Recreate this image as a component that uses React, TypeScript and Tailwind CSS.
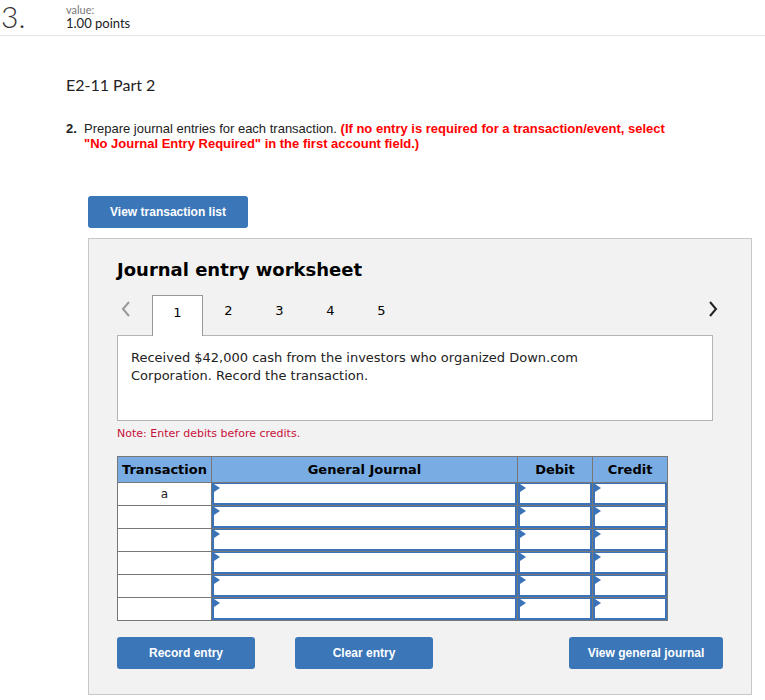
import React from 'react';

const narrow = "font-['Liberation_Sans_Narrow','Arial_Narrow','Liberation_Sans',sans-serif]";
const verdana = "font-['DejaVu_Sans','Verdana',sans-serif]";

function Triangle() {
  return (
    <svg className="absolute left-0 top-0" width="6" height="8" viewBox="0 0 6 8">
      <path d="M0 0 L6 4 L0 8 Z" fill="#3b73b9" />
    </svg>
  );
}

function InputCell({ w }: { w: string }) {
  return (
    <td className={`${w} h-[23px] border border-[#777] p-0 bg-white`}>
      <div className="relative h-[22px] border-2 border-[#3b73b9] border-t-[1px]">
        <Triangle />
      </div>
    </td>
  );
}

function BlueButton({ label, className }: { label: string; className?: string }) {
  return (
    <button
      className={`h-8 rounded-[3px] bg-[#3b76b8] text-white font-bold text-[12px] ${narrow} ${className ?? ''}`}
    >
      {label}
    </button>
  );
}

function Chevron({ dir, color }: { dir: 'left' | 'right'; color: string }) {
  return (
    <svg width="10" height="16" viewBox="0 0 10 16">
      <path
        d={dir === 'left' ? 'M8 1 L2 8 L8 15' : 'M2 1 L8 8 L2 15'}
        fill="none"
        stroke={color}
        strokeWidth="2"
      />
    </svg>
  );
}

export default function App() {
  const rows = ['a', '', '', '', '', ''];

  return (
    <div className="w-[765px] h-[700px] bg-white text-[#333] font-['Lato','Open_Sans',sans-serif] overflow-hidden">
      <div className="flex h-9 border-b border-[#e6e6e6]">
        <div className="w-[66px] pl-[1px] text-[30px] leading-[32px] font-light text-[#333]">3.</div>
        <div className="pt-[4px]">
          <div className="text-[11px] leading-[12px] text-[#777]">value:</div>
          <div className="text-[13px] leading-[15px] text-[#222]">1.00 points</div>
        </div>
      </div>

      <div className="pl-[66px]">
        <h2 className="mt-[40px] text-[16px] leading-[18px] text-[#222]">E2-11 Part 2</h2>

        <div className={`mt-[27px] flex text-[13px] leading-[15px] text-[#222] ${narrow}`}>
          <span className="w-[18px] shrink-0 font-bold">2.</span>
          <p className="w-[590px]">
            Prepare journal entries for each transaction.{' '}
            <span className="font-bold text-[#ff0000]">
              (If no entry is required for a transaction/event, select "No Journal Entry Required" in the first account field.)
            </span>
          </p>
        </div>
      </div>

      <div className="pl-[88px]">
        <BlueButton label="View transaction list" className="mt-[45px] w-[160px]" />

        <div className="mt-[10px] w-[664px] h-[457px] bg-[#f2f2f2] border border-[#c8c8c8] pl-[28px] pt-[20px]">
          <h3 className={`text-[18px] leading-[22px] font-bold text-black ${verdana}`}>Journal entry worksheet</h3>

          <div className={`mt-[13px] flex items-end h-[41px] text-[13px] ${verdana} relative`}>
            <span className="absolute left-[4px] top-[7px]">
              <Chevron dir="left" color="#999" />
            </span>
            <div className="ml-[35px] w-[51px] h-[41px] bg-white border border-[#999] border-b-0 flex justify-center pt-[7px] text-black relative z-10 -mb-[1px]">
              1
            </div>
            {[2, 3, 4, 5].map((n) => (
              <div key={n} className="w-[51px] h-[41px] flex justify-center pt-[7px] text-black">
                {n}
              </div>
            ))}
            <span className="absolute left-[591px] top-[7px]">
              <Chevron dir="right" color="#222" />
            </span>
          </div>

          <div className={`w-[596px] h-[86px] bg-white border border-[#b4b4b4] px-[13px] pt-[13px] text-[13px] leading-[18px] text-[#222] ${verdana}`}>
            Received $42,000 cash from the investors who organized Down.com
            <br />
            Corporation. Record the transaction.
          </div>

          <p className={`mt-[6px] text-[11px] leading-[14px] text-[#c8103a] ${verdana}`}>Note: Enter debits before credits.</p>

          <table className={`mt-[15px] border-collapse ${verdana} text-[13px]`}>
            <thead>
              <tr className="h-[26px] bg-[#78ace2]">
                <th className="w-[94px] border border-[#777] font-bold text-black">Transaction</th>
                <th className="w-[306px] border border-[#777] font-bold text-black">General Journal</th>
                <th className="w-[75px] border border-[#777] font-bold text-black">Debit</th>
                <th className="w-[75px] border border-[#777] font-bold text-black">Credit</th>
              </tr>
            </thead>
            <tbody>
              {rows.map((r, i) => (
                <tr key={i}>
                  <td className="w-[94px] h-[23px] border border-[#777] bg-white text-center text-[12px] text-[#222] p-0">{r}</td>
                  <InputCell w="w-[306px]" />
                  <InputCell w="w-[75px]" />
                  <InputCell w="w-[75px]" />
                </tr>
              ))}
            </tbody>
          </table>

          <div className="mt-[16px] flex w-[606px]">
            <BlueButton label="Record entry" className="w-[138px]" />
            <BlueButton label="Clear entry" className="ml-[40px] w-[138px]" />
            <BlueButton label="View general journal" className="ml-auto w-[154px]" />
          </div>
        </div>
      </div>
    </div>
  );
}
